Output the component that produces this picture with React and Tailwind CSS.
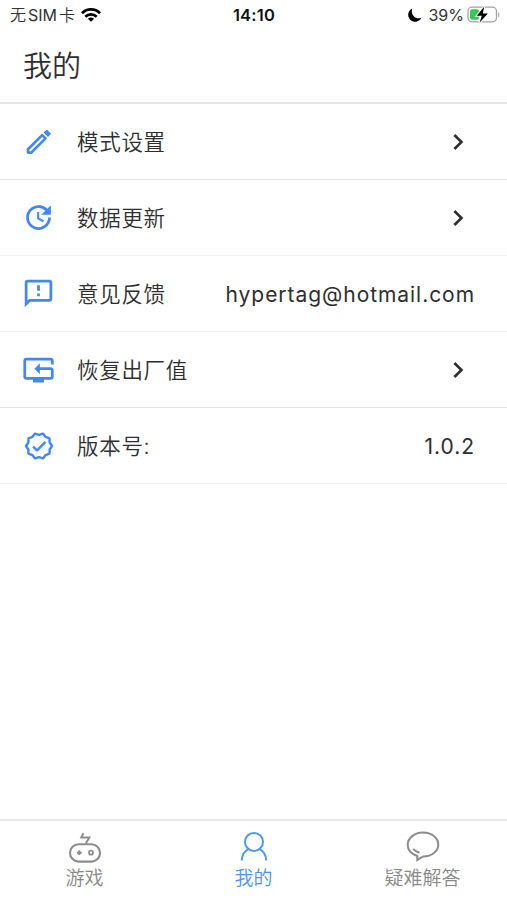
import { MdChevronRight, MdOutlineFeedback, MdOutlineUpdate, MdResetTv } from 'react-icons/md'

function PencilIcon() {
  return (
    <svg width="26" height="26" viewBox="0 0 26 26" fill="none" stroke="currentColor" strokeWidth="2.7" strokeLinejoin="round">
      <path d="M2 23.600v-3.300L16.200 6.100l3.300 3.300L5.300 23.600z" />
      <path d="m21.500 1.200 2.900 2.900c.5.500.5.900 0 1.400l-2.400 2.500-4.400-4.400 2.500-2.400c.5-.5.900-.5 1.400 0z" fill="currentColor" stroke="none" />
    </svg>
  )
}

function VerifiedIcon() {
  return (
    <svg width="30" height="30" viewBox="0 0 30 30" fill="none" stroke="currentColor" strokeWidth="2.4" strokeLinejoin="round">
      <path d="M28 15 25.650 11.500 25.500 7.400 21.600 5.900 19 2.600 15 3.800 11 2.600 8.400 5.900 4.500 7.400 4.350 11.500 2 15 4.350 18.500 4.500 22.600 8.400 24.100 11 27.400 15 26.200 19 27.400 21.600 24.100 25.500 22.600 25.650 18.500z" />
      <path d="m9.200 15.600 3.900 3.700 8.400-8.500" />
    </svg>
  )
}

const ROWS = [
  { label: '模式设置', Icon: PencilIcon, border: 'border-[#e4e4e6]' },
  { label: '数据更新', Icon: MdOutlineUpdate, size: 33, border: 'border-[#f1f1f3]' },
  { label: '意见反馈', Icon: MdOutlineFeedback, size: 33, value: 'hypertag@hotmail.com', border: 'border-[#f1f1f3]' },
  { label: '恢复出厂值', Icon: MdResetTv, size: 34, border: 'border-[#e4e4e6]' },
  { label: '版本号:', Icon: VerifiedIcon, value: '1.0.2', border: 'border-[#f1f1f3]' },
]

function WifiIcon() {
  return (
    <svg width="20" height="14" viewBox="0 0 20 14" fill="none" stroke="#000" strokeWidth="2.7">
      <path d="M1 5.200C6 .2 14 .2 19 5.200" />
      <path d="M4.300 8.700c3.200-3.200 8.200-3.200 11.400 0" />
      <path d="M10 13.800 6.900 10.700c1.800-1.500 4.400-1.500 6.200 0z" fill="#000" stroke="none" />
    </svg>
  )
}

function MoonIcon() {
  return (
    <svg width="14" height="14" viewBox="0 0 14 14">
      <path d="M4.300.4A7 7 0 1 0 13.500 9.800C7.500 12 2.100 6.500 4.300.4z" fill="#000" />
    </svg>
  )
}

function BatteryIcon() {
  return (
    <svg width="34" height="18" viewBox="0 0 34 18">
      <rect x="1" y="1.200" width="28.500" height="14.600" rx="4" fill="none" stroke="#a3a3a3" strokeWidth="1.300" />
      <path d="M31.200 6.200c1.600.6 1.600 4.400 0 5z" fill="#a3a3a3" />
      <rect x="3" y="3.200" width="9" height="10.600" rx="2" fill="#34c759" />
      <path d="M17.300.6 9.800 9.700h5L12.500 16.700l8.400-9.100h-5.200z" fill="#000" stroke="#fff" strokeWidth="2" paintOrder="stroke" />
    </svg>
  )
}

function GameIcon() {
  return (
    <svg width="34" height="32" viewBox="0 0 34 32" fill="none" stroke="#8c8c8c" strokeWidth="2.1">
      <rect x="2" y="13.200" width="30" height="17.400" rx="8.700" />
      <path d="M15.500 2.200 13.200 6.500h8.200l-3.600 6" strokeWidth="1.900" />
      <path d="M11.300 19.300v4.800M8.900 21.700h4.800" strokeWidth="2" />
      <circle cx="23" cy="21.700" r="2" strokeWidth="1.700" />
    </svg>
  )
}

function UserIcon() {
  return (
    <svg width="34" height="32" viewBox="0 0 34 32" fill="none" stroke="#4e9af0" strokeWidth="2">
      <circle cx="17" cy="10.900" r="9" />
      <path d="M11.500 18.200C7.500 20.200 5 24.200 4.700 29.500M22.500 18.200c4 2 6.500 6 6.800 11.300" />
    </svg>
  )
}

function ChatIcon() {
  return (
    <svg width="34" height="32" viewBox="0 0 34 32" fill="none" stroke="#8c8c8c" strokeWidth="2">
      <path d="M11.300 28.900v-3.900C5.300 23 1.700 18.800 1.700 13.800 1.700 7 8.500 1.500 17 1.500s15.300 5.300 15.300 12.100c0 6.700-6.500 11.600-15.100 11.900z" />
      <path d="M7.200 17.800c1.600 2 3.700 3.100 6.300 3.900" />
    </svg>
  )
}

const TABS = [
  { label: '游戏', Icon: GameIcon, color: 'text-[#888888]' },
  { label: '我的', Icon: UserIcon, color: 'text-[#4e94f3]' },
  { label: '疑难解答', Icon: ChatIcon, color: 'text-[#888888]' },
]

function StatusBar() {
  return (
    <div className="grid h-[29px] grid-cols-3 items-center pr-[6px] pl-[10px] text-[16px] leading-none text-[#333333]">
      <div className="flex items-center">
        <div className="flex items-center gap-[2px] text-[16px] font-[350]">
          <span>无</span>
          <span className="pt-px font-normal">SIM</span>
          <span>卡</span>
        </div>
        <span className="ml-[6px]">
          <WifiIcon />
        </span>
      </div>
      <span className="mr-[3px] pt-px text-center text-[16.500px] font-semibold tracking-[0.200px] text-[#111111]">14:10</span>
      <div className="flex items-center justify-end">
        <MoonIcon />
        <span className="mr-[3px] ml-[6px]">39%</span>
        <BatteryIcon />
      </div>
    </div>
  )
}

function SettingRow({ label, Icon, size, value, border }) {
  return (
    <div className={`flex h-[76px] items-center border-b-[1.500px] pr-[32px] pl-[22px] ${border}`}>
      <div className="flex w-[33px] justify-center text-[#4287f5]">
        <Icon size={size} />
      </div>
      <span className="ml-[22px] pt-[2px] text-[21.500px] font-[350] tracking-[0.700px]">{label}</span>
      {value ? (
        <span className="ml-auto pt-[2px] text-[21px] font-normal tracking-[0.950px]">{value}</span>
      ) : (
        <MdChevronRight size={32} className="mr-px ml-auto" />
      )}
    </div>
  )
}

export default function App() {
  return (
    <div className="flex h-[900px] w-[507px] flex-col bg-white font-['Inter','Noto_Sans_CJK_SC',sans-serif] text-[#2e2e30]">
      <StatusBar />

      <header className="flex h-[75px] items-center border-b-2 border-[#e6e6e6] pt-[3px] pl-[23px]">
        <h1 className="text-[29px] font-[350]">我的</h1>
      </header>

      <main className="flex-1">
        {ROWS.map((row) => (
          <SettingRow key={row.label} {...row} />
        ))}
      </main>

      {/* Bottom tabs */}
      <nav className="grid h-[81px] grid-cols-3 border-t-2 border-[#e6e6e6]">
        {TABS.map(({ label, Icon, color }) => (
          <div key={label} className={`flex flex-col items-center pt-[10px] ${color}`}>
            <Icon />
            <span className="mt-[2px] text-[19px] leading-[28px] font-[350]">{label}</span>
          </div>
        ))}
      </nav>
    </div>
  )
}
